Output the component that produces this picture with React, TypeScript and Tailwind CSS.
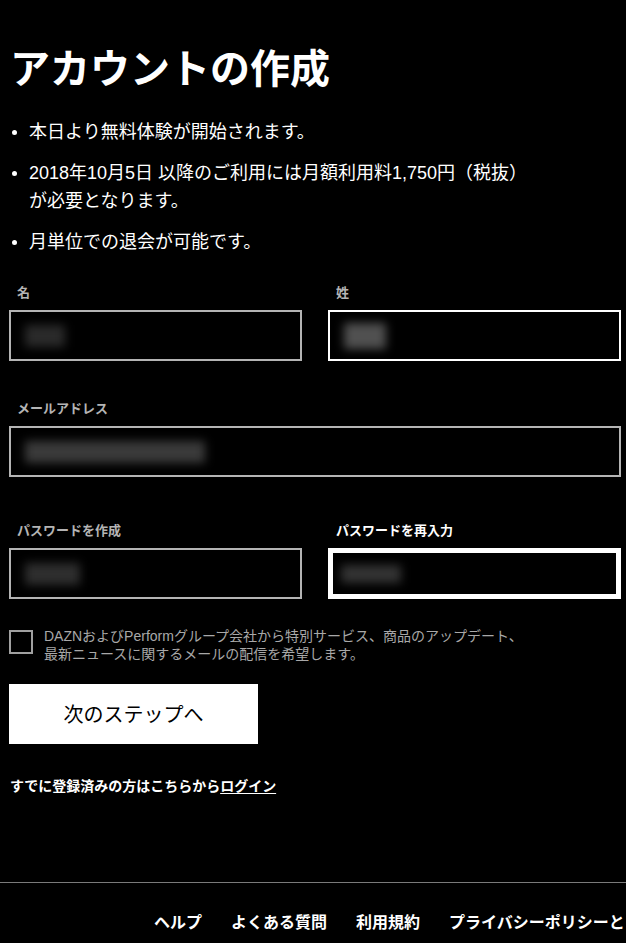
import React from 'react';

const font = "font-['Liberation_Sans','Noto_Sans_CJK_JP',sans-serif]";

const Bullet: React.FC<{ children: React.ReactNode }> = ({ children }) => (
  <li className="flex items-start">
    <span className="mt-[12px] ml-[12px] mr-[12px] h-[5px] w-[5px] shrink-0 rounded-full bg-white" />
    <span>{children}</span>
  </li>
);

const Field: React.FC<{
  label: string;
  labelClass?: string;
  boxClass: string;
  blob: string;
}> = ({ label, labelClass = 'text-[#b4b4b4]', boxClass, blob }) => (
  <div className="flex flex-col">
    <label className={`pl-[8px] text-[13px] font-bold leading-[18px] ${labelClass}`}>{label}</label>
    <div className={`mt-[8px] flex h-[51px] items-center overflow-hidden bg-black ${boxClass}`}>
      <div className={`blur-[5px] ${blob}`} />
    </div>
  </div>
);

export default function App() {
  return (
    <div className={`min-h-[943px] w-full overflow-hidden bg-black text-white ${font}`}>
      <h1 className="pl-[10px] pt-[42px] text-[40px] font-bold leading-[48px] font-['Noto_Sans_CJK_JP',sans-serif]">
        アカウントの作成
      </h1>

      <ul className="mt-[28px] flex flex-col gap-[13px] text-[18px] leading-[28px]">
        <Bullet>本日より無料体験が開始されます。</Bullet>
        <Bullet>
          2018年10月5日 以降のご利用には月額利用料1,750円（税抜）
          <br />
          が必要となります。
        </Bullet>
        <Bullet>月単位での退会が可能です。</Bullet>
      </ul>

      <div className="mt-[28px] pl-[9px] pr-[5px]">
        <div className="grid grid-cols-2 gap-[26px]">
          <Field
            label="名"
            boxClass="border-2 border-[#b4b4b4]"
            blob="ml-[14px] h-[22px] w-[40px] bg-[#2a2a2a]"
          />
          <Field
            label="姓"
            boxClass="border-2 border-white"
            blob="ml-[14px] h-[26px] w-[42px] bg-[#505050]"
          />
        </div>

        <div className="mt-[39px]">
          <Field
            label="メールアドレス"
            boxClass="border-2 border-[#b4b4b4]"
            blob="ml-[14px] h-[22px] w-[180px] bg-[#3a3a3a]"
          />
        </div>

        <div className="mt-[45px] grid grid-cols-2 gap-[26px]">
          <Field
            label="パスワードを作成"
            boxClass="border-2 border-[#b4b4b4]"
            blob="ml-[14px] h-[22px] w-[55px] bg-[#2e2e2e]"
          />
          <Field
            label="パスワードを再入力"
            labelClass="text-white"
            boxClass="border-[5px] border-white"
            blob="ml-[8px] h-[18px] w-[60px] bg-[#333333]"
          />
        </div>

        <div className="mt-[31px] flex items-start">
          <div className="h-[24px] w-[24px] shrink-0 border-2 border-[#a0a0a0]" />
          <p className="ml-[11px] -mt-[3px] text-[14px] leading-[18px] text-[#a8a8a8]">
            DAZNおよびPerformグループ会社から特別サービス、商品のアップデート、
            <br />
            最新ニュースに関するメールの配信を希望します。
          </p>
        </div>

        <button className="mt-[21px] flex h-[60px] w-[249px] items-center justify-center bg-white text-[20px] text-black font-['Noto_Sans_CJK_JP',sans-serif]">
          次のステップへ
        </button>

        <p className="mt-[32px] pl-[1px] text-[14px] font-bold leading-[18px] font-['Noto_Sans_CJK_JP',sans-serif]">
          すでに登録済みの方はこちらから<span className="underline underline-offset-2">ログイン</span>
        </p>
      </div>

      <footer className="mt-[88px] border-t border-[#7a7a7a]">
        <nav className="flex gap-[29px] whitespace-nowrap pl-[154px] pt-[27px] text-[16px] font-bold leading-[22px] font-['Noto_Sans_CJK_JP',sans-serif]">
          <a>ヘルプ</a>
          <a>よくある質問</a>
          <a>利用規約</a>
          <a>プライバシーポリシーと</a>
        </nav>
      </footer>
    </div>
  );
}
